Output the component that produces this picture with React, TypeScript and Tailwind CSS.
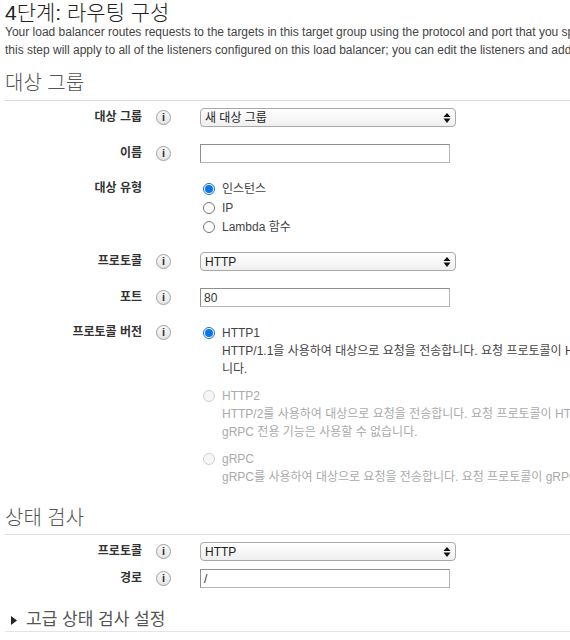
import type { ReactNode } from "react";

const FONT = { fontFamily: '"Liberation Sans", "Noto Sans CJK KR", sans-serif' };

function InfoIcon() {
  return (
    <span className="flex h-[15px] w-[15px] items-center justify-center rounded-full border border-[#a0a0a0] bg-gradient-to-b from-[#fafafa] to-[#e4e4e4] text-[11px] font-bold leading-none text-[#333]">
      i
    </span>
  );
}

function SelectBox({ value }: { value: string }) {
  return (
    <div className="flex h-[19px] w-[256px] items-center justify-between rounded-[4px] border border-[#a9a9a9] bg-gradient-to-b from-white to-[#efefef] pl-[4px] pr-[4px] text-[12px] text-[#222]">
      <span>{value}</span>
      <svg width="8" height="10" viewBox="0 0 8 10" aria-hidden="true">
        <path d="M4 0 L7.5 4 H0.5 Z" fill="#111" />
        <path d="M0.5 5.5 H7.5 L4 10 Z" fill="#111" />
      </svg>
    </div>
  );
}

function TextBox({ value = "" }: { value?: string }) {
  return (
    <div className="flex h-[19px] w-[250px] items-center border border-[#8f8f8f] border-b-[#b5b5b5] border-r-[#b5b5b5] bg-white pl-[3px] text-[12px] text-[#333]">
      {value}
    </div>
  );
}

function Radio({ checked = false, disabled = false }: { checked?: boolean; disabled?: boolean }) {
  if (checked) {
    return (
      <span className="flex h-[12px] w-[12px] items-center justify-center rounded-full border border-[#0b74e6] bg-white">
        <span className="h-[8px] w-[8px] rounded-full bg-[#0b74e6]" />
      </span>
    );
  }
  return (
    <span
      className={
        disabled
          ? "h-[12px] w-[12px] rounded-full border border-[#cfcfcf] bg-[#f6f6f6]"
          : "h-[12px] w-[12px] rounded-full border border-[#767676] bg-white"
      }
    />
  );
}

function FieldRow({ label, children, className = "" }: { label: string; children: ReactNode; className?: string }) {
  return (
    <div className={`flex items-start ${className}`}>
      <div className="w-[142px] shrink-0 text-right text-[12px] font-bold leading-[19px] text-[#333]">{label}</div>
      <div className="ml-[14px] flex h-[19px] w-[15px] shrink-0 items-center">
        <InfoIcon />
      </div>
      <div className="ml-[29px]">{children}</div>
    </div>
  );
}

function RadioLine({
  label,
  checked,
  disabled,
}: {
  label: string;
  checked?: boolean;
  disabled?: boolean;
}) {
  return (
    <div className="flex h-[19px] items-center">
      <div className="ml-[3px] flex w-[19px] items-center">
        <Radio checked={checked} disabled={disabled} />
      </div>
      <span className={disabled ? "text-[#aaa]" : "text-[#444]"}>{label}</span>
    </div>
  );
}

function VersionOption({
  title,
  lines,
  checked,
  disabled,
  className = "",
}: {
  title: string;
  lines: string[];
  checked?: boolean;
  disabled?: boolean;
  className?: string;
}) {
  return (
    <div className={`text-[12px] leading-[18px] ${disabled ? "text-[#aaa]" : "text-[#444]"} ${className}`}>
      <RadioLine label={title} checked={checked} disabled={disabled} />
      {lines.map((line) => (
        <div key={line} className="ml-[22px] whitespace-nowrap">
          {line}
        </div>
      ))}
    </div>
  );
}

export default function App() {
  return (
    <div className="h-[640px] w-[570px] overflow-hidden bg-white" style={FONT}>
      <div className="w-[900px] pl-[5px]">
        <h1 className="text-[21px] font-light leading-[26px] text-[#222]">4단계: 라우팅 구성</h1>
        <div className="mt-[-3px] text-[12px] leading-[18px] text-[#444]">
          <p className="whitespace-nowrap">
            Your load balancer routes requests to the targets in this target group using the protocol and port that you specify, and performs health checks
          </p>
          <p className="whitespace-nowrap">
            this step will apply to all of the listeners configured on this load balancer; you can edit the listeners and add listeners after the load balancer is created.
          </p>
        </div>

        {/* 대상 그룹 */}
        <h2 className="mt-[11px] text-[20px] font-light leading-[26px] text-[#555]">대상 그룹</h2>
        <div className="mt-[4px] h-px w-[565px] bg-[#dcdcdc]" />
      </div>

      <div className="mt-[7px]">
        <FieldRow label="대상 그룹">
          <SelectBox value="새 대상 그룹" />
        </FieldRow>
        <FieldRow label="이름" className="mt-[17px]">
          <TextBox />
        </FieldRow>
        <div className="mt-[16px] flex items-start">
          <div className="w-[142px] shrink-0 text-right text-[12px] font-bold leading-[19px] text-[#333]">대상 유형</div>
          <div className="ml-[58px] text-[12px]">
            <RadioLine label="인스턴스" checked />
            <RadioLine label="IP" />
            <RadioLine label="Lambda 함수" />
          </div>
        </div>
        <FieldRow label="프로토콜" className="mt-[16px]">
          <SelectBox value="HTTP" />
        </FieldRow>
        <FieldRow label="포트" className="mt-[17px]">
          <TextBox value="80" />
        </FieldRow>
        <FieldRow label="프로토콜 버전" className="mt-[16px]">
          <div>
            <VersionOption
              title="HTTP1"
              checked
              lines={[
                "HTTP/1.1을 사용하여 대상으로 요청을 전송합니다. 요청 프로토콜이 HTTP/1.1 또는 HTTP/2인 경우 지원됩",
                "니다.",
              ]}
            />
            <VersionOption
              title="HTTP2"
              disabled
              className="mt-[8px]"
              lines={[
                "HTTP/2를 사용하여 대상으로 요청을 전송합니다. 요청 프로토콜이 HTTP/2 또는 gRPC인 경우 지원되지만",
                "gRPC 전용 기능은 사용할 수 없습니다.",
              ]}
            />
            <VersionOption
              title="gRPC"
              disabled
              className="mt-[8px]"
              lines={["gRPC를 사용하여 대상으로 요청을 전송합니다. 요청 프로토콜이 gRPC인 경우 지원됩니다."]}
            />
          </div>
        </FieldRow>
      </div>

      {/* 상태 검사 */}
      <div className="pl-[5px]">
        <h2 className="mt-[19px] text-[20px] font-light leading-[26px] text-[#555]">상태 검사</h2>
        <div className="mt-[3px] h-px w-[565px] bg-[#dcdcdc]" />
      </div>
      <div className="mt-[7px]">
        <FieldRow label="프로토콜">
          <SelectBox value="HTTP" />
        </FieldRow>
        <FieldRow label="경로" className="mt-[8px]">
          <TextBox value="/" />
        </FieldRow>
      </div>

      <div className="pl-[5px]">
        <div className="mt-[21px] flex items-center">
          <svg width="6" height="9" viewBox="0 0 6 9" className="ml-[6px]" aria-hidden="true">
            <path d="M0 0 L6 4.5 L0 9 Z" fill="#222" />
          </svg>
          <span className="ml-[9px] text-[17px] leading-[22px] text-[#555]">고급 상태 검사 설정</span>
        </div>
        <div className="mt-[0px] h-px w-[565px] bg-[#e4e4e4]" />
      </div>
    </div>
  );
}
